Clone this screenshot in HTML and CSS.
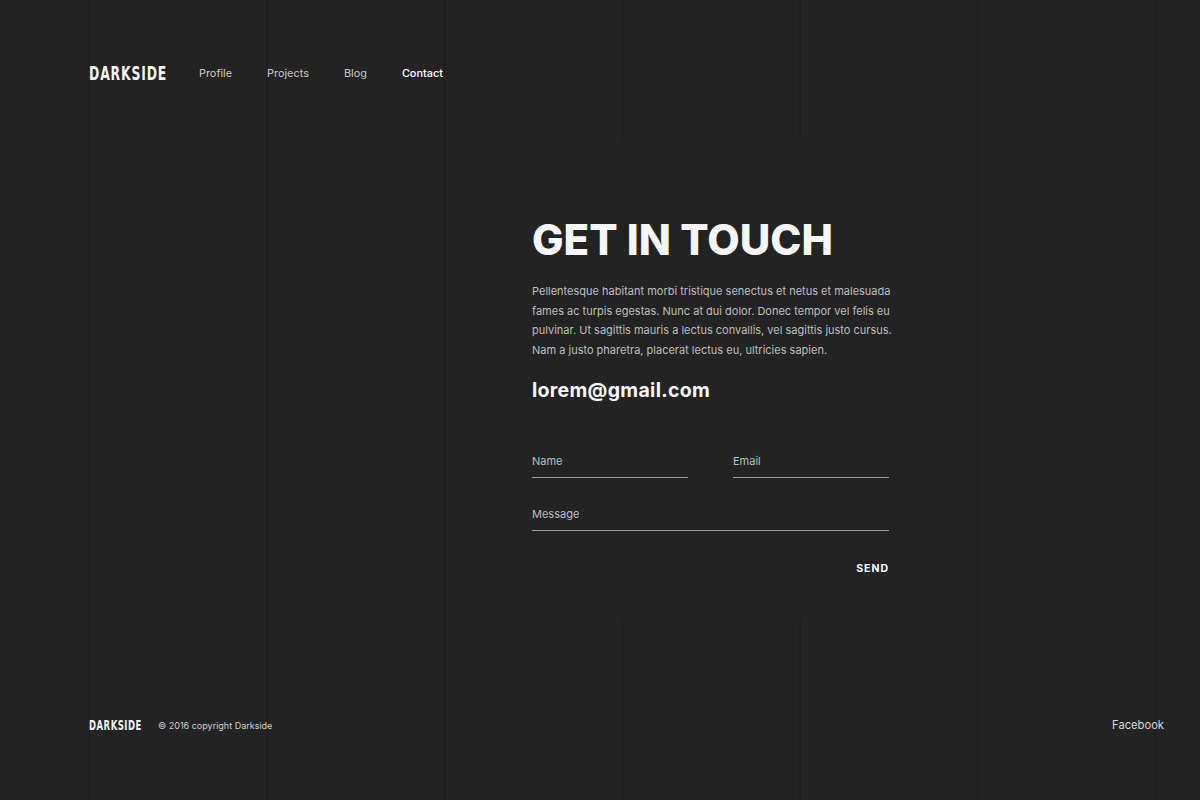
FILE: index.html
```html
<!DOCTYPE html>
<html lang="en">
<head>
<meta charset="utf-8">
<title>Darkside — Contact</title>
<link rel="stylesheet" href="styles.css">
</head>
<body>
<div class="page">
  <header class="header">
    <div class="logo"><span class="logo-text">DARKSIDE</span></div>
    <nav class="nav">
      <a class="nav-link" href="#">Profile</a>
      <a class="nav-link" href="#">Projects</a>
      <a class="nav-link" href="#">Blog</a>
      <a class="nav-link active" href="#">Contact</a>
    </nav>
  </header>

  <main class="main">
    <section class="contact">
      <h1 class="title">GET IN TOUCH</h1>
      <p class="lead">Pellentesque habitant morbi tristique senectus et netus et malesuada<br>fames ac turpis egestas. Nunc at dui dolor. Donec tempor vel felis eu<br>pulvinar. Ut sagittis mauris a lectus convallis, vel sagittis justo cursus.<br>Nam a justo pharetra, placerat lectus eu, ultricies sapien.</p>
      <div class="email">lorem@gmail.com</div>
      <form class="form">
        <div class="row">
          <label class="field"><span class="field-label">Name</span></label>
          <label class="field"><span class="field-label">Email</span></label>
        </div>
        <label class="field full"><span class="field-label">Message</span></label>
        <div class="actions"><button class="send" type="button">SEND</button></div>
      </form>
    </section>
  </main>

  <footer class="footer">
    <div class="footer-left">
      <div class="footer-logo"><span class="footer-logo-text">DARKSIDE</span></div>
      <div class="copyright">© 2016 copyright Darkside</div>
    </div>
    <a class="social" href="#">Facebook</a>
  </footer>
</div>
</body>
</html>
```

FILE: styles.css
```css
* { box-sizing: border-box; }

html, body {
  margin: 0;
  padding: 0;
  background: #232323;
}

body {
  font-family: "Inter", "Open Sans", sans-serif;
  color: #d0d0d0;
}

.page {
  width: 1200px;
  height: 800px;
  display: flex;
  flex-direction: column;
  background-color: #232323;
  background-image: linear-gradient(to right, #1b1b1b 0, #1b1b1b 1px, transparent 1px);
  background-size: 177.67px 100%;
  background-position: 89px 0;
  background-repeat: repeat-x;
  overflow: hidden;
}

/* Header */
.header {
  height: 140px;
  padding: 62px 0 0 89px;
  display: flex;
  align-items: flex-start;
  gap: 34px;
}

.logo {
  height: 22px;
  width: 76px;
  display: flex;
  align-items: center;
}

.logo-text {
  display: inline-block;
  font-family: "Liberation Sans Narrow", "DejaVu Sans Condensed", sans-serif;
  font-weight: 700;
  font-size: 20px;
  letter-spacing: 1.2px;
  color: #f4f4f4;
  transform: scaleX(0.69);
  transform-origin: left center;
  white-space: nowrap;
}

.nav {
  display: flex;
  gap: 35px;
  height: 22px;
  align-items: center;
}

.nav-link {
  font-size: 10.9px;
  color: #c8c8c8;
  text-decoration: none;
}

.nav-link.active {
  color: #ffffff;
  font-weight: 500;
}

/* Main */
.main {
  height: 478px;
  padding-left: 510px;
  display: flex;
}

.contact {
  width: 400px;
  height: 100%;
  background: #232323;
  padding: 76px 21px 0 22px;
}

.title {
  margin: 0;
  font-size: 42px;
  line-height: 48px;
  font-weight: 800;
  color: #f6f6f6;
  letter-spacing: 0;
}

.lead {
  margin: 18px 0 0;
  font-size: 11px;
  line-height: 19.7px;
  color: #bdbdbd;
  white-space: nowrap;
}

.email {
  margin-top: 17px;
  font-size: 19.5px;
  line-height: 24px;
  font-weight: 700;
  color: #f6f6f6;
  letter-spacing: 0.3px;
}

.form {
  margin-top: 50px;
  display: flex;
  flex-direction: column;
}

.row {
  display: flex;
  gap: 45px;
}

.field {
  display: block;
  width: 156px;
  height: 26px;
  border-bottom: 1px solid #9a9a9a;
}

.field.full {
  width: 357px;
  margin-top: 27px;
}

.field-label {
  display: block;
  font-size: 11px;
  line-height: 18px;
  color: #bdbdbd;
}

.actions {
  margin-top: 30px;
  display: flex;
  justify-content: flex-end;
}

.send {
  background: none;
  border: 0;
  padding: 0;
  font-family: "Inter", "Open Sans", sans-serif;
  font-size: 10.5px;
  line-height: 16px;
  font-weight: 700;
  letter-spacing: 1px;
  color: #ffffff;
  cursor: pointer;
}

/* Footer */
.footer {
  flex: 1;
  padding: 97px 36px 0 89px;
  display: flex;
  justify-content: space-between;
  align-items: flex-start;
}

.footer-left {
  display: flex;
  align-items: center;
  gap: 17px;
  height: 20px;
}

.footer-logo {
  width: 52px;
  display: flex;
  align-items: center;
}

.footer-logo-text {
  display: inline-block;
  font-family: "Liberation Sans Narrow", "DejaVu Sans Condensed", sans-serif;
  font-weight: 700;
  font-size: 14px;
  letter-spacing: 0.8px;
  color: #f4f4f4;
  transform: scaleX(0.67);
  transform-origin: left center;
  white-space: nowrap;
}

.copyright {
  font-size: 9px;
  color: #cfcfcf;
}

.social {
  height: 20px;
  line-height: 20px;
  font-size: 11.2px;
  color: #d8d8d8;
  text-decoration: none;
}
```
